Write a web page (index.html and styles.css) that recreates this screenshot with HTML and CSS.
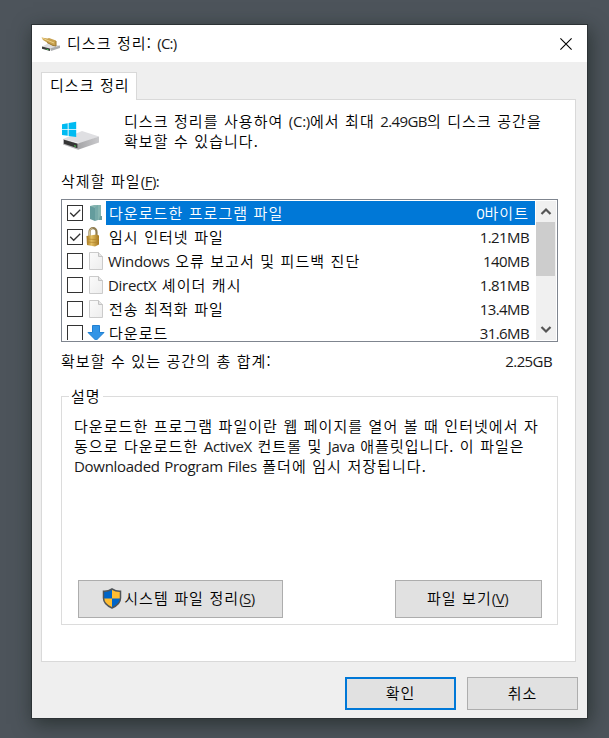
FILE: index.html
```html
<!DOCTYPE html>
<html lang="ko">
<head>
<meta charset="utf-8">
<title>디스크 정리</title>
<link rel="stylesheet" href="styles.css">
</head>
<body>
<svg width="0" height="0" class="defs">
  <defs>
    <linearGradient id="paper" x1="0" y1="0" x2="1" y2="1"><stop offset="0" stop-color="#fbfbfb"/><stop offset="1" stop-color="#ededed"/></linearGradient>
    <linearGradient id="gold" x1="0" x2="1"><stop offset="0" stop-color="#a87b22"/><stop offset=".4" stop-color="#e3bf63"/><stop offset="1" stop-color="#a5771f"/></linearGradient>
    <linearGradient id="side" x1="0" x2="1"><stop offset="0" stop-color="#a5a5a7"/><stop offset="1" stop-color="#c9c9cc"/></linearGradient>
    <symbol id="page" viewBox="0 0 16 20"><path d="M1.500 1.500h9l4 4v13h-13z" fill="url(#paper)" stroke="#cbcbcb"/><path d="M10.500 1.500v4h4" fill="#e5e5e5" stroke="#c3c3c3"/></symbol>
    <symbol id="tick" viewBox="0 0 16 16"><path d="M2.500 7.800l4 4 7.500-7.500" fill="none" stroke="#333" stroke-width="1.500"/></symbol>
  </defs>
</svg>
<div class="window">
  <header class="titlebar">
    <svg class="app-icon" viewBox="0 0 20 16">
      <path d="M1 10.500l6-3 12 2-7 3.500z" fill="#dedee0"/><path d="M1 10.500l8 2V15l-8-2.300z" fill="#383b39"/><path d="M9 12.500l10-3V12l-9 3z" fill="#a9abad"/><path d="M5.500 13.200l2 .6" stroke="#43c354"/>
      <path d="M.5 1.500l6 1L8 2l7 2.500V10l-3-.5-6-3-4-2.500z" fill="#c8a250"/><path d="M1 2l7 3 5 2" stroke="#ecd089" fill="none"/><path d="M6 6.500l6 3 3 .5V5" stroke="#9a762f" fill="none"/>
    </svg>
    <h1 class="title">디스크 정리: <span class="lat">(C:)</span></h1>
    <svg class="close" viewBox="0 0 12 12"><path d="M.4.400l11.200 11.200M11.600.4L.4 11.600" stroke="#000" stroke-width="1.1"/></svg>
  </header>
  <main class="body">
    <div class="tab">디스크 정리</div>
    <section class="panel">
      <div class="intro">
        <svg class="drive" viewBox="0 0 38 30">
          <path d="M1 18L20 10l17 5.500-18 7z" fill="#dfdfe2"/><path d="M16 22.500l21-7v6L16 28.800z" fill="url(#side)"/><path d="M1 18l15 4.500v6.300L1 23.500z" fill="#b7b7ba"/><path d="M2 18.800l13.500 4v4.500L2 22.700z" fill="#353535"/><path d="M12 24.200l2 .6v1l-2-.6z" fill="#46d34f"/>
          <path d="M0 3.200l5.700-1v6H0zM6.600 2L14.200.8v7.400H6.600zM0 9.100h5.700v5.700L0 14zM6.600 9.100h7.600v7l-7.600-1.200z" fill="#00bbf2"/>
        </svg>
        <p class="intro-text">디스크 정리를 사용하여 <span class="lat">(C:)</span>에서 최대 <span class="lat num">2.49GB</span>의 디스크 공간을<br>확보할 수 있습니다.</p>
      </div>
      <div class="list-label">삭제할 파일<span class="key">(<u>F</u>):</span></div>
      <div class="listbox">
        <ul class="rows">
          <li class="row selected"><span class="check"><svg><use href="#tick"/></svg></span>
            <svg class="icon" viewBox="0 0 18 20"><path d="M3 3l4-1h7v15H6z" fill="#86b5b0"/><path d="M3 3l5 2v13l-5-2z" fill="#649c9d"/><path d="M8 4l3-2v15l-3 1z" fill="#77aaa9"/><path d="M13 13h2v4h-3z" fill="#6b9f9e"/></svg>
            <span class="item"><span>다운로드한 프로그램 파일</span><span class="size"><span class="lat">0</span>바이트</span></span></li>
          <li class="row"><span class="check"><svg><use href="#tick"/></svg></span>
            <svg class="icon lock" viewBox="0 0 18 20"><path d="M4.500 10V5a3.500 3.800 0 0 1 7 0V9" fill="none" stroke="#8f7c50" stroke-width="2.200"/><path d="M4.500 9V5a3.500 3.800 0 0 1 3-3.700" fill="none" stroke="#d6c798"/><path d="M1.500 9l10-1.500 2.500 1v9l-4 2-8-1.500z" fill="url(#gold)"/><path d="M2 12l8 .5 4-1M2 15l8 .5 4-1" stroke="#b3842d" stroke-width=".7" fill="none"/></svg>
            <span class="item"><span>임시 인터넷 파일</span><span class="size lat num">1.21MB</span></span></li>
          <li class="row"><span class="check"></span><svg class="icon"><use href="#page"/></svg><span class="item"><span><span class="lat">Windows</span> 오류 보고서 및 피드백 진단</span><span class="size lat num">140MB</span></span></li>
          <li class="row"><span class="check"></span><svg class="icon"><use href="#page"/></svg><span class="item"><span><span class="lat">DirectX</span> 셰이더 캐시</span><span class="size lat num">1.81MB</span></span></li>
          <li class="row"><span class="check"></span><svg class="icon"><use href="#page"/></svg><span class="item"><span>전송 최적화 파일</span><span class="size lat num">13.4MB</span></span></li>
          <li class="row"><span class="check"></span>
            <svg class="icon" viewBox="0 0 18 20"><path d="M5.500 2.500h7v7h4.500L9 17.500 1 9.500h4.500z" fill="#3294e6" stroke="#2080d2"/></svg>
            <span class="item"><span>다운로드</span><span class="size lat num">31.6MB</span></span></li>
        </ul>
        <div class="scroll">
          <svg class="arrow" viewBox="0 0 20 21"><path d="M5.500 13L10 8.500l4.500 4.500" fill="none" stroke="#555" stroke-width="2.200"/></svg>
          <div class="thumb"></div>
          <svg class="arrow" viewBox="0 0 20 21"><path d="M5.500 8L10 12.500 14.500 8" fill="none" stroke="#555" stroke-width="2.200"/></svg>
        </div>
      </div>
      <div class="total"><span>확보할 수 있는 공간의 총 합계:</span><span class="lat num">2.25GB</span></div>
      <fieldset class="group">
        <legend>설명</legend>
        <p class="desc">다운로드한 프로그램 파일이란 웹 페이지를 열어 볼 때 인터넷에서 자<br>동으로 다운로드한 <span class="lat">ActiveX</span> 컨트롤 및 <span class="lat">Java</span> 애플릿입니다. 이 파일은<br><span class="lat">Downloaded Program Files</span> 폴더에 임시 저장됩니다.</p>
        <div class="actions">
          <button class="btn system"><svg class="shield" viewBox="0 0 20 21"><path d="M10 1C7.500 2.600 4 3.500 1.500 3.300V10c0 5 4 8 8.500 10 4.500-2 8.500-5 8.500-10V3.300C16 3.500 12.500 2.600 10 1z" fill="#ffbd32"/><path d="M10 1C7.500 2.600 4 3.500 1.500 3.300V10.500H10zM10 10.500h8.500C18 15.300 14.500 18 10 20z" fill="#0065c8"/><path d="M10 1C7.500 2.600 4 3.500 1.500 3.300V10c0 5 4 8 8.500 10 4.500-2 8.500-5 8.500-10V3.300C16 3.500 12.500 2.600 10 1z" fill="none" stroke="#505559" stroke-width="1.500"/></svg><span>시스템 파일 정리<span class="key">(<u>S</u>)</span></span></button>
          <button class="btn view"><span>파일 보기<span class="key">(<u>V</u>)</span></span></button>
        </div>
      </fieldset>
    </section>
    <footer class="footer"><button class="btn ok">확인</button><button class="btn">취소</button></footer>
  </main>
</div>
</body>
</html>
```
FILE: styles.css
```css
* { box-sizing: border-box; }
body {
  margin: 0; padding: 24px 21px 19px 31px; height: 738px; overflow: hidden;
  background: #4d545b; color: #000;
  font: 350 15px/20px "Noto Sans CJK KR", sans-serif;
  letter-spacing: 1.05px; word-spacing: .2px;
}
.defs { position: absolute; }
.lat, .key { font-family: "Open Sans", "Noto Sans", sans-serif; font-weight: 400; letter-spacing: -.3px; word-spacing: 1px; color: #1a1a1a; }
.num { letter-spacing: -.6px; }
.key { letter-spacing: -.5px; }
u { text-underline-offset: 2px; text-decoration-thickness: 1px; }
p, h1, ul { margin: 0; padding: 0; }
svg { display: block; }
.window { width: 557px; height: 695px; border: 1px solid #2c3235; background: #efefef; box-shadow: 2px 5px 18px rgba(20, 30, 25, .6); }
.titlebar { height: 37px; background: #fff; display: flex; align-items: center; padding: 0 15px 0 9px; }
.app-icon { width: 20px; height: 16px; margin-right: 6px; }
.title { font-size: 15px; font-weight: 350; flex: 1; padding-bottom: 2px; }
.title .lat { letter-spacing: -.8px; }
.close { width: 12px; height: 12px; }
.body { padding: 10px 9px 0; }
.tab { width: 96px; height: 28px; border: 1px solid #d9d9d9; border-bottom: 0; background: #fff; padding: 2px 0 0 8px; white-space: nowrap; position: relative; margin-bottom: -1px; }
.panel { width: 535px; height: 563px; border: 1px solid #d9d9d9; background: #fff; padding: 11px 17px 0 19px; }
.intro { display: flex; height: 60px; }
.drive { width: 38px; height: 30px; margin: 10px 23px 0 1px; flex: none; }
.intro-text { white-space: nowrap; padding-left: 1px; }
.list-label { height: 28px; }
.listbox { width: 497px; height: 143px; border: 1px solid #7f858f; padding: 1px; display: flex; overflow: hidden; }
.rows { width: 472px; list-style: none; overflow: hidden; height: 139px; }
.row { display: flex; height: 24px; align-items: center; padding-left: 4px; }
.check { width: 16px; height: 16px; border: 1px solid #333; flex: none; }
.check svg { width: 14px; height: 14px; }
.icon { width: 18px; height: 20px; margin: 0 1px 0 4px; flex: none; }
.lock { margin: 0 3px 0 2px; }
.item { height: 24px; flex: 1; display: flex; justify-content: space-between; align-items: center; padding: 0 6px 1px 3px; white-space: nowrap; }
.item .lat:first-child { margin-left: -1px; }
.selected .item, .selected .lat { background: #0078d7; color: #fff; }
.scroll { width: 20px; margin-left: 1px; background: #f0f0f0; display: flex; flex-direction: column; }
.arrow { width: 20px; height: 21px; }
.thumb { width: 19px; height: 54px; background: #cdcdcd; margin-bottom: auto; }
.total { height: 20px; margin-top: 9px; display: flex; justify-content: space-between; padding-right: 6px; }
.group { width: 497px; height: 239px; margin: 15px 0 0; border: 1px solid #dcdcdc; padding: 10px 15px 6px 12px; display: flex; flex-direction: column; }
legend { padding: 0 2px; margin-left: -5px; height: 20px; }
.desc { white-space: nowrap; }
.actions { margin: 104px 0 0 4px; display: flex; justify-content: space-between; }
.btn { background: #e1e1e1; border: 1px solid #adadad; border-radius: 0; width: 111px; height: 33px; padding: 0 0 2px; font: inherit; letter-spacing: inherit; word-spacing: inherit; color: #000; display: flex; align-items: center; justify-content: center; white-space: nowrap; }
.system { width: 205px; height: 38px; padding-right: 4px; }
.view { width: 147px; height: 38px; padding-right: 2px; }
.shield { width: 20px; height: 21px; margin: 1px 2px 0 0; }
.footer { display: flex; gap: 11px; margin: 15px 0 0 304px; }
.ok { border: 2px solid #0078d7; }
```
